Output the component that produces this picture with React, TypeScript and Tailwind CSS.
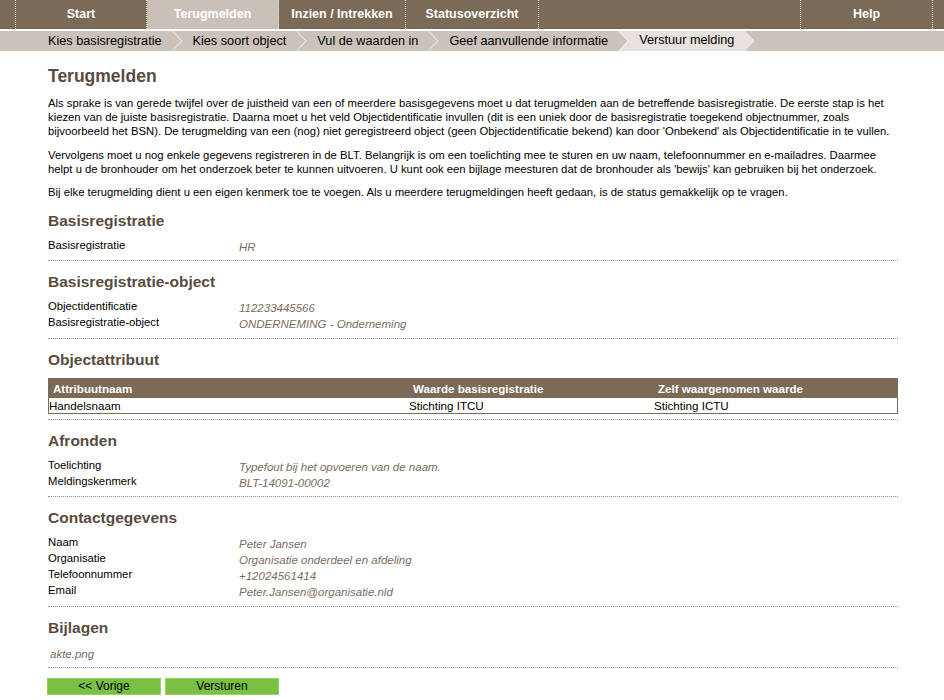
import React from "react";

const FONT = { fontFamily: '"Liberation Sans", Arial, Helvetica, sans-serif' };

const navItems = [
  { label: "Start", w: "w-[132px]", active: false, first: true },
  { label: "Terugmelden", w: "w-[132px]", active: true },
  { label: "Inzien / Intrekken", w: "w-[127px]", active: false },
  { label: "Statusoverzicht", w: "w-[133px]", active: false },
  { label: "", w: "w-[262px]", active: false },
  { label: "Help", w: "w-[132px]", active: false },
];

const crumbs = [
  "Kies basisregistratie",
  "Kies soort object",
  "Vul de waarden in",
  "Geef aanvullende informatie",
  "Verstuur melding",
];

function Chevron({ fillRight, fillLeft }: { fillRight?: boolean; fillLeft?: boolean }) {
  return (
    <svg width="11" height="20" viewBox="0 0 11 20" className="shrink-0 block">
      {fillRight && <polygon points="0.5,0 10,10 0.5,20 11,20 11,0" fill="#e7e2dd" />}
      {fillLeft && <polygon points="0,0 10,10 0,20" fill="#e7e2dd" />}
      <polyline points="0.5,0 10,10 0.5,20" fill="none" stroke="#f4f1ee" strokeWidth="1" />
    </svg>
  );
}

function Heading({ children, first }: { children: React.ReactNode; first?: boolean }) {
  return (
    <h2
      className={
        "text-[15.5px] leading-[18px] font-bold text-[#5a4b41] " + (first ? "mt-[13px]" : "mt-[12px]")
      }
    >
      {children}
    </h2>
  );
}

function Rows({ rows, extra }: { rows: [string, string][]; extra?: boolean }) {
  return (
    <div
      className={
        "mt-[7px] border-b border-dotted border-[#8c8c8c] " + (extra ? "pb-[8px]" : "pb-[7px]")
      }
    >
      {rows.map(([l, v]) => (
        <div key={l} className="grid grid-cols-[191px_1fr] text-[11.3px] leading-[16px]">
          <span className="text-black">{l}</span>
          <span className="italic text-[#7b6c61] text-[11.5px] translate-y-[2px]">{v}</span>
        </div>
      ))}
    </div>
  );
}

export default function App() {
  return (
    <div style={FONT} className="bg-white min-h-[700px] w-[944px] text-black">
      {/* top navigation */}
      <div className="h-[29px] bg-[#7b6a56] flex pl-[15px]">
        {navItems.map((n, i) => (
          <div
            key={i}
            className={
              "h-full flex items-center justify-center text-white font-bold text-[12.5px] border-r border-dotted border-[#e9e3dc] " +
              n.w +
              (n.active ? " bg-[#c9c1b8]" : "") +
              (n.first ? " border-l" : "")
            }
          >
            {n.label}
          </div>
        ))}
      </div>
      {/* breadcrumb */}
      <div className="mt-[2px] h-[20px] bg-[#cbc3bb] flex items-stretch pl-[48px] text-[12.7px]">
        {crumbs.map((c, i) => {
          const current = i === crumbs.length - 1;
          const nextCurrent = i === crumbs.length - 2;
          return (
            <div key={c} className="flex items-stretch">
              <div className={"flex items-center leading-[20px] pr-[10px] " + (current ? "bg-[#e7e2dd]" : "")}>
                <span className={current ? "-mt-[3px]" : ""}>{c}</span>
              </div>
              <Chevron fillRight={nextCurrent} fillLeft={current} />
              {!current && <div className={"w-[10px] " + (nextCurrent ? "bg-[#e7e2dd]" : "")} />}
            </div>
          );
        })}
      </div>

      {/* main content */}
      <div className="ml-[48px] w-[852px]">
        <h1 className="mt-[15px] text-[17.5px] leading-[20px] font-bold text-[#5a4b41]">Terugmelden</h1>
        <p className="mt-[10px] text-[11.3px] leading-[14px]">
          Als sprake is van gerede twijfel over de juistheid van een of meerdere basisgegevens moet u dat terugmelden aan de betreffende basisregistratie. De eerste stap is het kiezen van de juiste basisregistratie. Daarna moet u het veld Objectidentificatie invullen (dit is een uniek door de basisregistratie toegekend objectnummer, zoals bijvoorbeeld het BSN). De terugmelding van een (nog) niet geregistreerd object (geen Objectidentificatie bekend) kan door 'Onbekend' als Objectidentificatie in te vullen.
        </p>
        <p className="mt-[10px] text-[11.3px] leading-[14px]">
          Vervolgens moet u nog enkele gegevens registreren in de BLT. Belangrijk is om een toelichting mee te sturen en uw naam, telefoonnummer en e-mailadres. Daarmee helpt u de bronhouder om het onderzoek beter te kunnen uitvoeren. U kunt ook een bijlage meesturen dat de bronhouder als 'bewijs' kan gebruiken bij het onderzoek.
        </p>
        <p className="mt-[9px] text-[11.3px] leading-[14px]">
          Bij elke terugmelding dient u een eigen kenmerk toe te voegen. Als u meerdere terugmeldingen heeft gedaan, is de status gemakkelijk op te vragen.
        </p>
      </div>
      <div className="ml-[48px] w-[850px]">
        <Heading first>Basisregistratie</Heading>
        <Rows rows={[["Basisregistratie", "HR"]]} />

        <Heading>Basisregistratie-object</Heading>
        <Rows
          extra
          rows={[
            ["Objectidentificatie", "112233445566"],
            ["Basisregistratie-object", "ONDERNEMING - Onderneming"],
          ]}
        />

        <Heading>Objectattribuut</Heading>
        <div className="mt-[9px] pb-[5px] border-b border-dotted border-[#8c8c8c]">
          <div className="border border-[#7b6a56]">
            <div className="grid grid-cols-[360px_245px_1fr] bg-[#7b6a56] text-white font-bold text-[11.6px] h-[19px] items-center leading-[14px]">
              <span className="pl-[4px]">Attribuutnaam</span>
              <span className="pl-[4px]">Waarde basisregistratie</span>
              <span className="pl-[4px]">Zelf waargenomen waarde</span>
            </div>
            <div className="grid grid-cols-[360px_245px_1fr] text-[11.6px] h-[15px] items-center leading-[14px]">
              <span>Handelsnaam</span>
              <span>Stichting ITCU</span>
              <span>Stichting ICTU</span>
            </div>
          </div>
        </div>

        <Heading>Afronden</Heading>
        <Rows
          rows={[
            ["Toelichting", "Typefout bij het opvoeren van de naam."],
            ["Meldingskenmerk", "BLT-14091-00002"],
          ]}
        />

        <Heading>Contactgegevens</Heading>
        <Rows
          extra
          rows={[
            ["Naam", "Peter Jansen"],
            ["Organisatie", "Organisatie onderdeel en afdeling"],
            ["Telefoonnummer", "+12024561414"],
            ["Email", "Peter.Jansen@organisatie.nld"],
          ]}
        />

        <Heading>Bijlagen</Heading>
        <div className="mt-[9px] pb-[5px] border-b border-dotted border-[#8c8c8c]">
          <div className="pl-[2px] text-[11.5px] leading-[16px] italic text-[#7b6c61]">akte.png</div>
        </div>

        <div className="mt-[10px] flex gap-[4px] -ml-[1px]">
          <button className="w-[114px] h-[17px] bg-[#79c043] border border-[#92d162] text-[12px] leading-[15px] text-black">
            &lt;&lt; Vorige
          </button>
          <button className="w-[114px] h-[17px] bg-[#79c043] border border-[#92d162] text-[12px] leading-[15px] text-black">
            Versturen
          </button>
        </div>
      </div>
    </div>
  );
}
